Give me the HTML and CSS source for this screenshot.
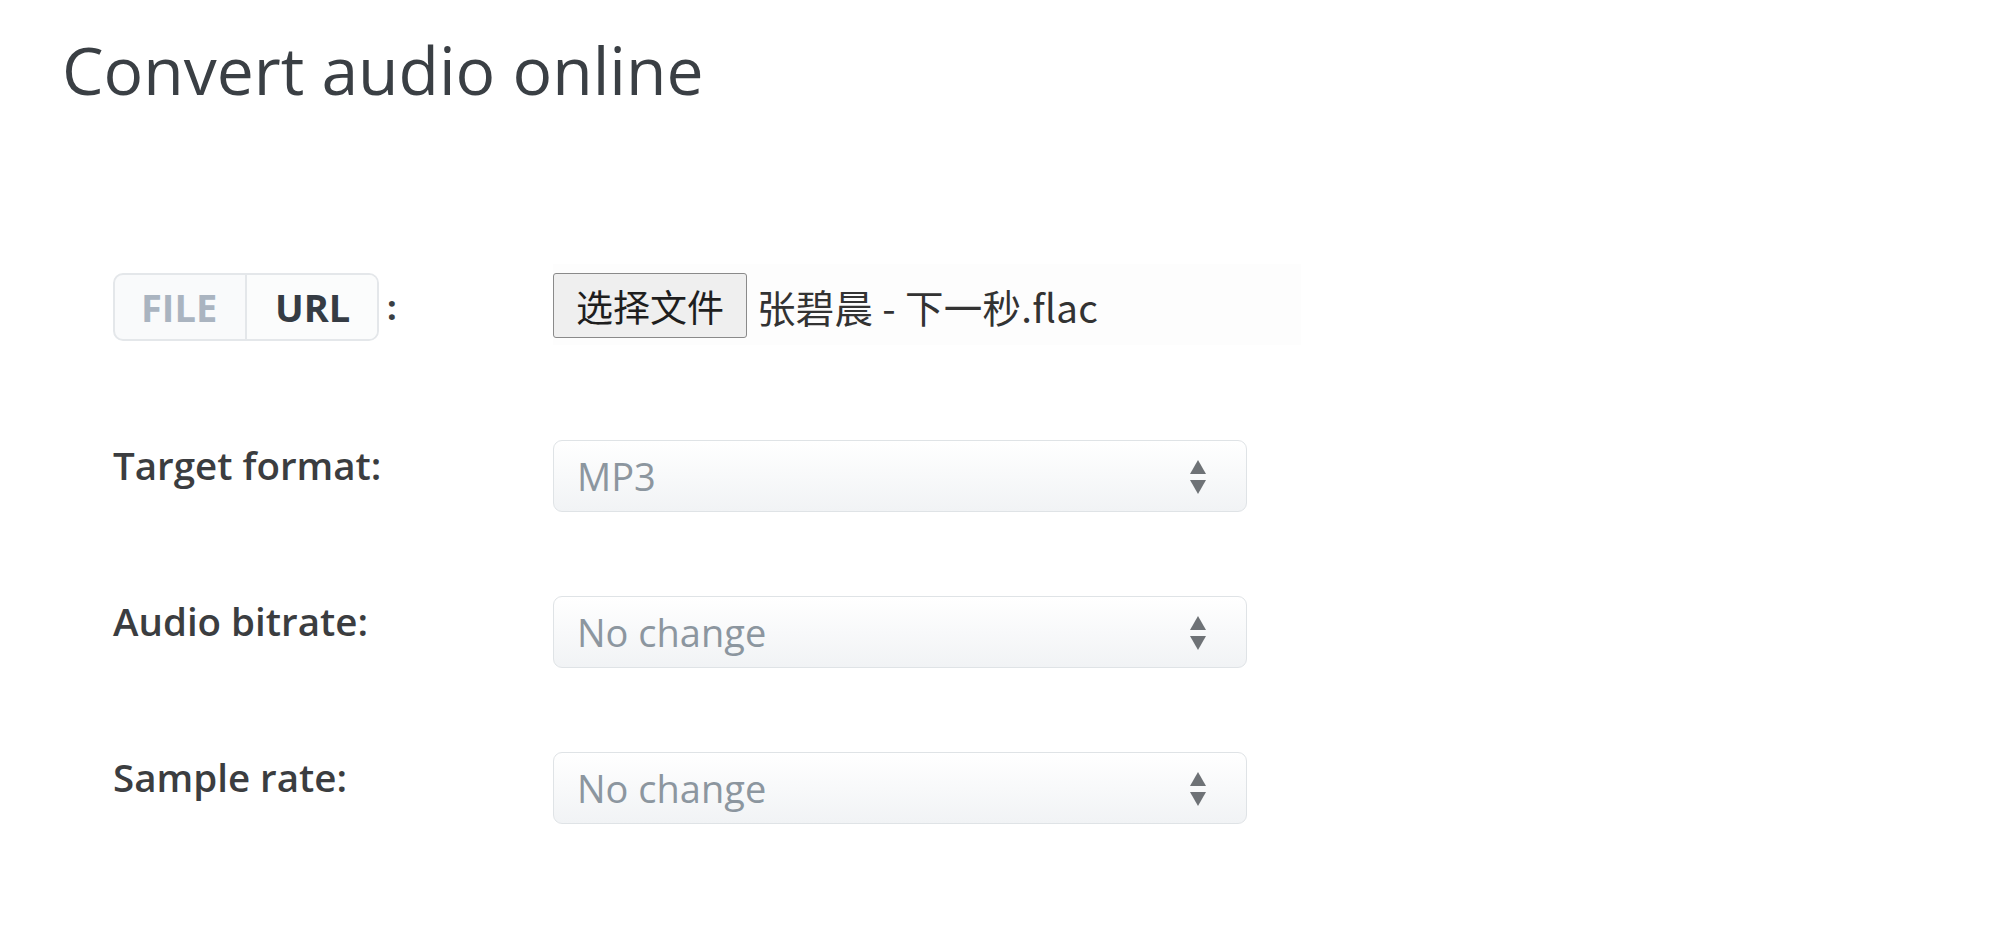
FILE: index.html
```html
<!DOCTYPE html>
<html lang="en">
<head>
<meta charset="utf-8">
<title>Convert audio online</title>
<link rel="stylesheet" href="styles.css">
</head>
<body>
<main class="page">
  <h1 class="title">Convert audio online</h1>
  <form class="form">
    <div class="row row-file">
      <div class="label-cell">
        <div class="toggle">
          <span class="seg seg-file">FILE</span>
          <span class="seg seg-url">URL</span>
        </div>
        <span class="colon">:</span>
      </div>
      <div class="file-box">
        <span class="file-btn">选择文件</span>
        <span class="file-name">张碧晨 - 下一秒.flac</span>
      </div>
    </div>
    <div class="row">
      <label class="label">Target format:</label>
      <div class="select"><span class="select-text">MP3</span><svg class="arrows" width="18" height="36" viewBox="0 0 18 36"><path d="M9 2 L17 16 L1 16 Z" fill="#6e7276"/><path d="M1 22 L17 22 L9 36 Z" fill="#6e7276"/></svg></div>
    </div>
    <div class="row">
      <label class="label">Audio bitrate:</label>
      <div class="select"><span class="select-text">No change</span><svg class="arrows" width="18" height="36" viewBox="0 0 18 36"><path d="M9 2 L17 16 L1 16 Z" fill="#6e7276"/><path d="M1 22 L17 22 L9 36 Z" fill="#6e7276"/></svg></div>
    </div>
    <div class="row">
      <label class="label">Sample rate:</label>
      <div class="select"><span class="select-text">No change</span><svg class="arrows" width="18" height="36" viewBox="0 0 18 36"><path d="M9 2 L17 16 L1 16 Z" fill="#6e7276"/><path d="M1 22 L17 22 L9 36 Z" fill="#6e7276"/></svg></div>
    </div>
  </form>
</main>
</body>
</html>
```
FILE: styles.css
```css
* { box-sizing: border-box; }
html, body { margin: 0; padding: 0; background: #ffffff; }
body {
  font-family: "Open Sans", "Noto Sans", "Noto Sans CJK SC", sans-serif;
  color: #3a3f44;
}
.page { padding-top: 30px; }
.title {
  margin: 0 0 0 62px;
  font-size: 66px;
  line-height: 79px;
  font-weight: 400;
  color: #3a3f44;
}
.form {
  margin: 149px 0 0 113px;
  display: flex;
  flex-direction: column;
  gap: 84px;
}
.row {
  display: grid;
  grid-template-columns: 440px 694px;
  align-items: start;
}
.row-file { margin-bottom: 11px; }
.label-cell {
  display: flex;
  align-items: center;
  margin-top: 15px;
}
.toggle {
  display: flex;
  height: 68px;
  border: 2px solid #e4e7ea;
  border-radius: 10px;
  background: #f9fafb;
  overflow: hidden;
}
.seg {
  display: flex;
  align-items: center;
  font-weight: 700;
  font-size: 38px;
}
.seg-file {
  width: 132px;
  padding-left: 26px;
  color: #aab4c0;
  border-right: 2px solid #e4e7ea;
}
.seg-url {
  width: 130px;
  padding-left: 28px;
  color: #353c44;
  background: #fbfcfc;
}
.colon {
  margin-left: 8px;
  font-weight: 700;
  font-size: 34px;
  color: #3a3f44;
}
.file-box {
  width: 748px;
  height: 81px;
  margin-top: 6px;
  display: flex;
  align-items: flex-start;
  padding-top: 9px;
  background: #fdfdfd;
  font-family: "Noto Sans CJK SC", "Noto Sans", sans-serif;
}
.file-btn {
  display: flex;
  align-items: center;
  justify-content: center;
  width: 194px;
  height: 65px;
  border: 1.5px solid #8a8a8a;
  border-radius: 3px;
  background: #efefef;
  font-size: 37px;
  color: #1e1e1e;
}
.file-name {
  margin-left: 10px;
  height: 65px;
  display: flex;
  align-items: center;
  font-size: 38.5px;
  letter-spacing: 0.3px;
  color: #333333;
}
.label {
  font-size: 38.5px;
  line-height: 50px;
  font-weight: 600;
  color: #3b3d40;
}
.select {
  height: 72px;
  display: flex;
  align-items: center;
  justify-content: space-between;
  padding: 0 39px 0 23px;
  border: 1.5px solid #dfe3e6;
  border-radius: 9px;
  background: linear-gradient(#ffffff, #f1f3f5);
  font-size: 38px;
  color: #8c969f;
}
.arrows { display: block; }
```
